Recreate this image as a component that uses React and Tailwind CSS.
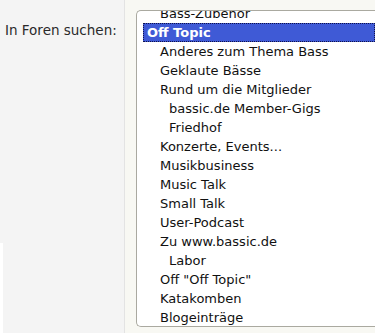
const forums = [
  { name: 'Bass-Zubehör', level: 1 },
  { name: 'Off Topic', level: 0, selected: true },
  { name: 'Anderes zum Thema Bass', level: 1 },
  { name: 'Geklaute Bässe', level: 1 },
  { name: 'Rund um die Mitglieder', level: 1 },
  { name: 'bassic.de Member-Gigs', level: 2 },
  { name: 'Friedhof', level: 2 },
  { name: 'Konzerte, Events...', level: 1 },
  { name: 'Musikbusiness', level: 1 },
  { name: 'Music Talk', level: 1 },
  { name: 'Small Talk', level: 1 },
  { name: 'User-Podcast', level: 1 },
  { name: 'Zu www.bassic.de', level: 1 },
  { name: 'Labor', level: 2 },
  { name: 'Off "Off Topic"', level: 1 },
  { name: 'Katakomben', level: 1 },
  { name: 'Blogeinträge', level: 1 },
]

const indent = ['pl-[3px]', 'pl-[16px]', 'pl-[25px]']

function ForumRow({ forum }) {
  if (forum.selected) {
    return (
      <li className={`h-[19px] leading-[17px] border border-dotted border-[#10124a] bg-[#3f5ad6] text-white font-bold ${indent[forum.level]}`}>
        {forum.name}
      </li>
    )
  }
  return (
    <li className={`h-[19px] leading-[17px] border border-transparent text-[#111] whitespace-nowrap ${indent[forum.level]}`}>
      {forum.name}
    </li>
  )
}

function App() {
  return (
    <div className="flex w-[375px] h-[333px] overflow-hidden font-['DejaVu_Sans',sans-serif] text-[13px]">
      {/* label column */}
      <div className="w-[125px] shrink-0 flex flex-col bg-[#f4f4f4] border-r border-[#e3e3e3]">
        <div className="pl-[5px] pt-[21px] text-[13.5px] leading-[19px] text-[#2a2a2a]">In Foren suchen:</div>
        <div className="mt-auto h-[90px] w-[3px] bg-white"></div>
      </div>

      {/* forum list */}
      <div className="flex-1 min-w-0 bg-[#f8f8f3] pl-[11px] pt-[10px]">
        <div className="h-[317px] bg-white border border-r-0 border-[#aaa9a0] rounded-l-[5px] overflow-hidden pl-[6px]">
          <ul className="-mt-[7px]">
            {forums.map((f) => (
              <ForumRow key={f.name} forum={f} />
            ))}
          </ul>
        </div>
      </div>
    </div>
  )
}

export default App
